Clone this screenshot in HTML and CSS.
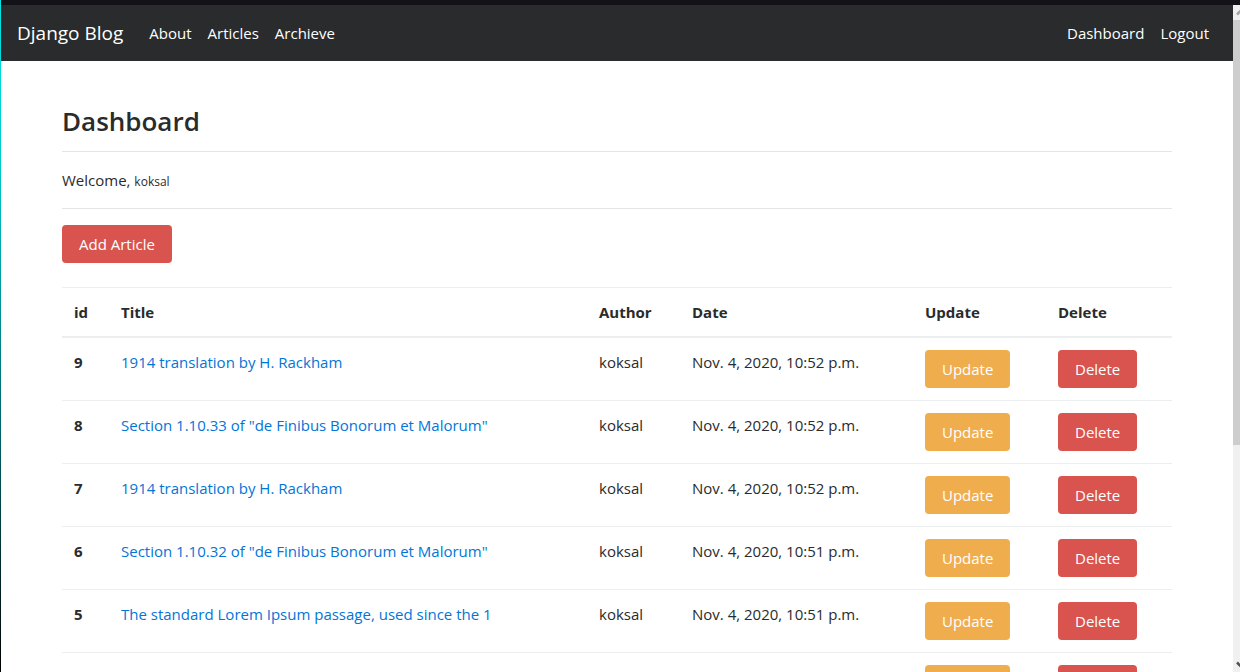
FILE: index.html
```html
<!DOCTYPE html>
<html lang="en">
<head>
<meta charset="utf-8">
<title>Django Blog</title>
<link rel="stylesheet" href="styles.css">
</head>
<body>
<div class="window">
  <div class="window-edge"></div>
  <div class="window-main">
    <div class="window-top"></div>
    <div class="viewport">
      <div class="page">
        <nav class="navbar">
          <a class="brand" href="#">Django Blog</a>
          <a class="nav-link" href="#">About</a>
          <a class="nav-link" href="#">Articles</a>
          <a class="nav-link" href="#">Archieve</a>
          <div class="nav-user">
            <a class="nav-link" href="#">Dashboard</a>
            <a class="nav-link" href="#">Logout</a>
          </div>
        </nav>
        <main class="container">
          <h2 class="heading">Dashboard</h2>
          <hr class="rule">
          <p class="welcome">Welcome, <small class="username">koksal</small></p>
          <hr class="rule">
          <button class="btn btn-danger" type="button">Add Article</button>
          <table class="table">
            <colgroup>
              <col class="col-id"><col><col class="col-author"><col class="col-date"><col class="col-update"><col class="col-delete">
            </colgroup>
            <thead>
              <tr><th>id</th><th>Title</th><th>Author</th><th>Date</th><th>Update</th><th>Delete</th></tr>
            </thead>
            <tbody>
              <tr><th>9</th><td><a class="link" href="#">1914 translation by H. Rackham</a></td><td>koksal</td><td>Nov. 4, 2020, 10:52 p.m.</td><td><button class="btn btn-warning" type="button">Update</button></td><td><button class="btn btn-danger" type="button">Delete</button></td></tr>
              <tr><th>8</th><td><a class="link" href="#">Section 1.10.33 of "de Finibus Bonorum et Malorum"</a></td><td>koksal</td><td>Nov. 4, 2020, 10:52 p.m.</td><td><button class="btn btn-warning" type="button">Update</button></td><td><button class="btn btn-danger" type="button">Delete</button></td></tr>
              <tr><th>7</th><td><a class="link" href="#">1914 translation by H. Rackham</a></td><td>koksal</td><td>Nov. 4, 2020, 10:52 p.m.</td><td><button class="btn btn-warning" type="button">Update</button></td><td><button class="btn btn-danger" type="button">Delete</button></td></tr>
              <tr><th>6</th><td><a class="link" href="#">Section 1.10.32 of "de Finibus Bonorum et Malorum"</a></td><td>koksal</td><td>Nov. 4, 2020, 10:51 p.m.</td><td><button class="btn btn-warning" type="button">Update</button></td><td><button class="btn btn-danger" type="button">Delete</button></td></tr>
              <tr><th>5</th><td><a class="link" href="#">The standard Lorem Ipsum passage, used since the 1</a></td><td>koksal</td><td>Nov. 4, 2020, 10:51 p.m.</td><td><button class="btn btn-warning" type="button">Update</button></td><td><button class="btn btn-danger" type="button">Delete</button></td></tr>
              <tr><th>4</th><td><a class="link" href="#">Where can I get some?</a></td><td>koksal</td><td>Nov. 4, 2020, 10:51 p.m.</td><td><button class="btn btn-warning" type="button">Update</button></td><td><button class="btn btn-danger" type="button">Delete</button></td></tr>
            </tbody>
          </table>
        </main>
      </div>
      <div class="scrollbar">
        <svg class="arrow" viewBox="0 0 7 15"><path d="M4 9.5L8 5.5" stroke="#a3a3a3" stroke-width="2.5" fill="none"/></svg>
        <div class="thumb"></div>
        <svg class="arrow arrow-down" viewBox="0 0 7 15"><path d="M4 5.5L8 9.5" stroke="#505050" stroke-width="2.5" fill="none"/></svg>
      </div>
    </div>
  </div>
</div>
</body>
</html>
```
FILE: styles.css
```css
* {
  box-sizing: border-box;
}

body {
  margin: 0;
  font-family: "Open Sans", "Noto Sans", sans-serif;
  font-size: 15px;
  line-height: 24px;
  color: #292b2c;
  background: #fff;
}

.window {
  display: flex;
  height: 100vh;
  overflow: hidden;
}

.window-edge {
  width: 1px;
  background: linear-gradient(#00e5e5, #00c8c8 25%, #006068 65%, #000 100%);
}

.window-main {
  flex: 1;
  min-width: 0;
  display: flex;
  flex-direction: column;
}

.window-top {
  flex: none;
  height: 5px;
  background: #121218;
}

.viewport {
  flex: 1;
  min-height: 0;
  display: flex;
}

.page {
  flex: 1;
  min-width: 0;
  overflow: hidden;
}

.navbar {
  display: flex;
  align-items: center;
  height: 56px;
  padding: 0 16px;
  background: #292b2c;
}

.brand {
  margin-right: 18px;
  font-size: 19px;
  color: #fff;
  text-decoration: none;
}

.nav-link {
  padding: 8px;
  color: #fff;
  text-decoration: none;
}

.nav-user {
  display: flex;
  margin-left: auto;
}

.container {
  max-width: 1140px;
  margin: 0 auto;
  padding: 40px 15px;
}

.heading {
  margin: 0;
  padding-top: 2px;
  font-size: 26px;
  line-height: 36px;
  font-weight: 600;
}

.rule {
  height: 1px;
  margin: 16px 0;
  border: 0;
  background: #e5e5e5;
}

.heading + .rule {
  margin-top: 12px;
}

.welcome {
  margin: 0;
}

.username {
  font-size: 12px;
  line-height: 1;
}

.btn {
  display: block;
  height: 38px;
  padding: 0 17px;
  border: 0;
  border-radius: 4px;
  font: inherit;
  color: #fff;
  cursor: pointer;
}

.btn-danger {
  background: #d9534f;
}

.btn-warning {
  background: #f0ad4e;
}

.table {
  width: 100%;
  margin-top: 24px;
  table-layout: fixed;
  border-collapse: collapse;
}

.table th,
.table td {
  padding: 12px;
  border-top: 1px solid #eceeef;
  text-align: left;
  vertical-align: top;
  white-space: nowrap;
}

.table thead th {
  border-bottom: 2px solid #eceeef;
}

.col-id {
  width: 47px;
}

.col-author {
  width: 93px;
}

.col-date {
  width: 233px;
}

.col-update {
  width: 133px;
}

.col-delete {
  width: 126px;
}

.link {
  color: #0275d8;
  text-decoration: none;
}

.scrollbar {
  width: 7px;
  display: flex;
  flex-direction: column;
  background: #f0f0f0;
}

.arrow {
  flex: none;
  width: 7px;
  height: 15px;
}

.arrow-down {
  margin-top: auto;
}

.thumb {
  height: 63.7%;
  background: #cdcdcd;
}
```
